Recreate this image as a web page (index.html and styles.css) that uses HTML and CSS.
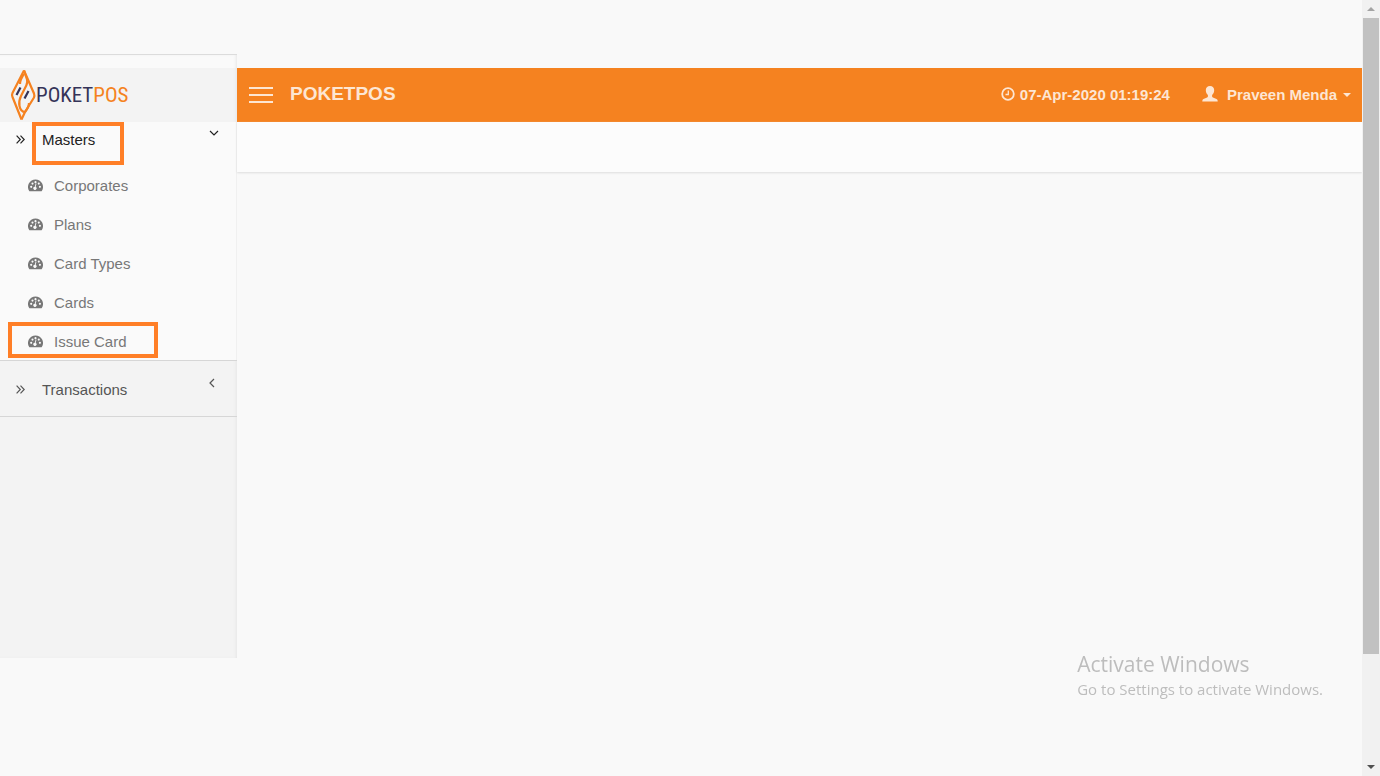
FILE: index.html
```html
<!DOCTYPE html>
<html lang="en">
<head>
  <meta charset="UTF-8">
  <title>POKETPOS</title>
  <meta name="viewport" content="width=device-width,initial-scale=1">
  <link rel="stylesheet" href="styles.css">
</head>
<body>

<svg class="defs" aria-hidden="true">
  <symbol id="dash" viewBox="0 0 16 14">
    <path fill="currentColor" fill-rule="evenodd" d="M8 1a8 8 0 0 0-6.700 12.300q.2.400.7.400h12q.500 0 .7-.4A8 8 0 0 0 8 1zM3.400 7.800a1.100 1.100 0 1 0 0 2.300 1.100 1.100 0 0 0 0-2.300zM4.800 4.300a1.100 1.100 0 1 0 0 2.300 1.100 1.100 0 0 0 0-2.300zM8 2.800a1.100 1.100 0 1 0 0 2.300 1.100 1.100 0 0 0 0-2.300zM11.500 4.300a1.100 1.100 0 1 0 0 2.300 1.100 1.100 0 0 0 0-2.300zM12.700 7.800a1.100 1.100 0 1 0 0 2.300 1.100 1.100 0 0 0 0-2.300zM9 5.700L8.200 9a1.700 1.700 0 1 1-1-.2L8.200 5.500z"/>
  </symbol>
  <symbol id="angles" viewBox="0 0 9 9">
    <path fill="none" stroke="currentColor" stroke-width="1.200" d="M.6.600l3.700 3.900L.6 8.400M4.500.600l3.700 3.900-3.700 3.900"/>
  </symbol>
</svg>

<div class="page">
  <nav class="sidebar">
    <a class="logo" href="#" aria-label="PoketPOS home">
      <svg class="logo-mark" viewBox="0 0 26 53" aria-hidden="true">
        <g fill="none" stroke="#f58220" stroke-width="2.200" stroke-linejoin="round">
          <path d="M14 1.500L2.500 24q-1 2 0 4L11.500 50.500"/>
          <path d="M14 1.500L24 24.500q.7 2 0 4L15 43l-3.500 7.500"/>
          <path d="M14 1.500l3 9q.8 3-.7 6L11 27q-2.500 5-1.500 10 1.200 6 5.500 6"/>
          <path d="M14 5q-4 6-4 10M15 43q4-5 4-9"/>
        </g>
        <path fill="none" stroke="#353358" stroke-width="2.200" d="M6.500 26l4-7.500M14.500 29.500l4-7.500"/>
      </svg>
      <span class="logo-text">POKET<span>POS</span></span>
    </a>

    <ul class="menu">
      <li class="group open">
        <a class="group-head" href="#">
          <svg class="angles"><use href="#angles"/></svg>
          <span class="group-name">Masters</span>
          <svg class="caret" viewBox="0 0 10 10"><path d="M1 3l4 4 4-4"/></svg>
        </a>
        <ul class="submenu">
          <li><a href="#"><svg><use href="#dash"/></svg>Corporates</a></li>
          <li><a href="#"><svg><use href="#dash"/></svg>Plans</a></li>
          <li><a href="#"><svg><use href="#dash"/></svg>Card Types</a></li>
          <li><a href="#"><svg><use href="#dash"/></svg>Cards</a></li>
          <li><a class="marked" href="#"><svg><use href="#dash"/></svg>Issue Card</a></li>
        </ul>
      </li>
      <li class="group">
        <a class="group-head" href="#">
          <svg class="angles"><use href="#angles"/></svg>
          <span class="group-name">Transactions</span>
          <svg class="caret" viewBox="0 0 10 10"><path d="M7 1L3 5l4 4"/></svg>
        </a>
      </li>
    </ul>
  </nav>

  <main class="content">
    <header class="topbar">
      <button class="toggle" type="button" aria-label="Toggle menu"><i></i><i></i><i></i></button>
      <h1>POKETPOS</h1>
      <div class="clock">
        <svg viewBox="0 0 14 14" aria-hidden="true"><g fill="none" stroke="currentColor"><circle cx="7" cy="7" r="5.800" stroke-width="1.800"/><path stroke-width="1.300" d="M7.300 3.500v4H4.500"/></g></svg>
        <time>07-Apr-2020 01:19:24</time>
      </div>
      <button class="user" type="button">
        <svg viewBox="0 0 16 16" aria-hidden="true"><path fill="currentColor" d="M8 0C5.300 0 3.800 1.700 3.800 4c0 2.200.8 3.900 2.100 5v1.500c0 .5-.3.800-.8 1L1.500 13Q.3 13.600.3 15v.6h15.400V15q0-1.400-1.200-2l-3.600-1.500c-.5-.2-.8-.5-.8-1V9c1.300-1.100 2.100-2.800 2.100-5C12.200 1.700 10.700 0 8 0z"/></svg>
        Praveen Menda
        <span class="down"></span>
      </button>
    </header>
    <div class="subbar"></div>
  </main>

  <div class="scrollbar" aria-hidden="true">
    <span class="arrow up"></span>
    <span class="thumb"></span>
    <span class="arrow dn"></span>
  </div>
</div>

<div class="watermark">
  <p class="big">Activate Windows</p>
  <p>Go to Settings to activate Windows.</p>
</div>

</body>
</html>
```
FILE: styles.css
```css
*, *::after { box-sizing: border-box; }
body {
  margin: 0;
  background: #f9f9f9;
  font-family: "Liberation Sans", Arial, sans-serif;
  font-size: 15px;
}
a { color: inherit; text-decoration: none; }
ul { list-style: none; margin: 0; padding: 0; }
button {
  border: 0;
  padding: 0;
  background: none;
  color: inherit;
  font: inherit;
  cursor: pointer;
}
.defs { position: absolute; width: 0; height: 0; }
.page {
  display: grid;
  grid-template-columns: 237px 1fr 18px;
  min-height: 100vh;
}

/* sidebar */
.sidebar {
  margin: 54px 0 118px;
  padding-top: 13px;
  border-top: 1px solid #dcdcdc;
  background: linear-gradient(#fafafa 13px, #f3f3f3 13px);
  box-shadow: inset -2px 0 3px -1px #e6e6e6;
}
.logo {
  display: flex;
  align-items: center;
  height: 54px;
  padding-left: 10px;
}
.logo-mark { width: 26px; height: 53px; }
.logo-text {
  color: #353358;
  font-family: "Roboto Condensed", "Liberation Sans Narrow", Roboto, sans-serif;
  font-size: 21px;
}
.logo-text span { color: #f58220; }

.group {
  border-bottom: 1px solid #d6d6d6;
  color: #555;
}
.group.open {
  background: #fafafa;
  box-shadow: inset -1px 0 #f0f0f0;
  margin-bottom: 2px;
}
.group-head {
  display: flex;
  position: relative;
  height: 53px;
  padding: 0 18px 0 16px;
  line-height: 53px;
}
.open .group-head {
  height: 43px;
  line-height: 35px;
  color: #222;
}
.angles {
  width: 9px;
  height: 9px;
  align-self: center;
  margin-right: 17px;
}
.open .angles { margin-top: -8px; }
.group-name { flex: 1; }
.caret {
  width: 10px;
  height: 10px;
  margin-top: 15px;
  margin-right: 2px;
  fill: none;
  stroke: currentColor;
  stroke-width: 1.2;
}
.open .caret { margin-top: 6px; margin-right: 0; }
.submenu a {
  display: flex;
  align-items: center;
  position: relative;
  height: 39px;
  padding: 1px 0 0 28px;
  color: #777;
}
.submenu svg {
  width: 15px;
  height: 14px;
  margin-right: 11px;
}
.open .group-head::after,
.marked::after {
  content: "";
  position: absolute;
  border: 4px solid #ff7f27;
}
.open .group-head::after {
  left: 32px;
  top: 0;
  width: 92px;
  height: 43px;
}
.marked::after {
  left: 8px;
  top: 1px;
  width: 150px;
  height: 36px;
}

/* top bar */
.content { margin-top: 68px; }
.topbar {
  display: flex;
  align-items: center;
  height: 54px;
  padding: 0 11px 0 12px;
  background: #f58220;
  color: #fde6d3;
  font-weight: 700;
}
.toggle {
  display: grid;
  gap: 5px;
  width: 24px;
}
.toggle i { height: 2px; background: #fde6d3; }
h1 {
  flex: 1;
  margin: 0 0 2px 17px;
  font-size: 19px;
}
.clock, .user { display: flex; align-items: center; margin-bottom: 2px; }
.clock svg { width: 14px; height: 14px; margin-right: 5px; }
.user { margin-left: 32px; }
.user svg { width: 16px; height: 16px; margin-right: 9px; }
.down {
  margin: 2px 0 0 6px;
  border: 4px solid transparent;
  border-top-color: currentColor;
  border-bottom: 0;
}
.subbar {
  height: 50px;
  background: #fcfcfc;
  box-shadow: 0 1px 2px #ddd;
}

/* window scrollbar */
.scrollbar {
  display: flex;
  flex-direction: column;
  align-items: center;
  background: #f1f1f1;
}
.thumb {
  width: 16px;
  height: 82%;
  margin-bottom: auto;
  background: #c1c1c1;
}
.arrow { border: 4px solid transparent; }
.up { margin: 7px 0; border-top: 0; border-bottom-color: #a3a3a3; }
.dn { margin: 7px 0; border-bottom: 0; border-top-color: #505050; }

.watermark {
  position: fixed;
  right: 57px;
  bottom: 75px;
  color: #bdbdbd;
  font: 15px/24px "Open Sans", "Noto Sans", sans-serif;
}
.watermark p { margin: 0; }
.watermark .big { font-size: 21px; line-height: 26px; }
```
